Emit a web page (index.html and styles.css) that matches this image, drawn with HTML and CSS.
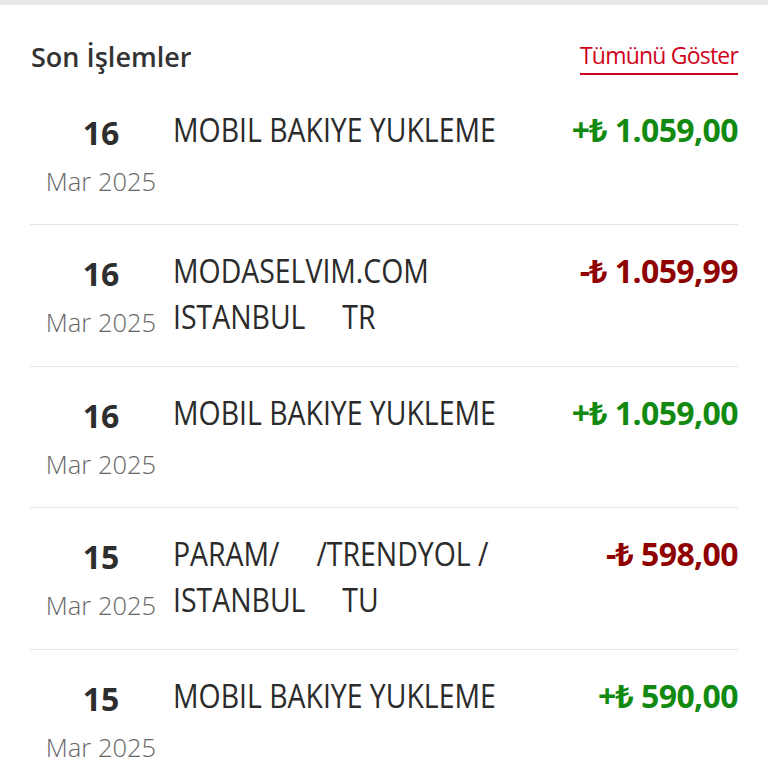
FILE: index.html
```html
<!DOCTYPE html>
<html lang="tr">
<head>
<meta charset="utf-8">
<link rel="stylesheet" href="styles.css">
</head>
<body>
<div class="topbar"></div>
<section class="panel">
  <header class="head">
    <h2 class="title">Son İşlemler</h2>
    <a class="more" href="#">Tümünü Göster</a>
  </header>
  <ul class="list">
    <li class="row">
      <div class="date"><span class="day">16</span><span class="month">Mar 2025</span></div>
      <div class="desc">MOBIL BAKIYE YUKLEME</div>
      <div class="amount plus">+₺ 1.059,00</div>
    </li>
    <li class="row">
      <div class="date"><span class="day">16</span><span class="month">Mar 2025</span></div>
      <div class="desc">MODASELVIM.COM<br>ISTANBUL&nbsp;&nbsp;&nbsp;&nbsp;&nbsp;TR</div>
      <div class="amount minus">-₺ 1.059,99</div>
    </li>
    <li class="row">
      <div class="date"><span class="day">16</span><span class="month">Mar 2025</span></div>
      <div class="desc">MOBIL BAKIYE YUKLEME</div>
      <div class="amount plus">+₺ 1.059,00</div>
    </li>
    <li class="row">
      <div class="date"><span class="day">15</span><span class="month">Mar 2025</span></div>
      <div class="desc">PARAM/&nbsp;&nbsp;&nbsp;&nbsp;&nbsp;/TRENDYOL /<br>ISTANBUL&nbsp;&nbsp;&nbsp;&nbsp;&nbsp;TU</div>
      <div class="amount minus">-₺ 598,00</div>
    </li>
    <li class="row">
      <div class="date"><span class="day">15</span><span class="month">Mar 2025</span></div>
      <div class="desc">MOBIL BAKIYE YUKLEME</div>
      <div class="amount plus">+₺ 590,00</div>
    </li>
  </ul>
</section>
</body>
</html>
```
FILE: styles.css
```css
* { box-sizing: border-box; }
html, body { margin: 0; padding: 0; background: #fff; }
body {
  font-family: "Open Sans", "Noto Sans", sans-serif;
  color: #2e2e2e;
  overflow: hidden;
}
.topbar { height: 5px; background: #e9e9e9; }
.panel { padding: 0 30px 0 30px; }
.head {
  display: flex;
  justify-content: space-between;
  align-items: center;
  height: 78.5px;
  padding: 26px 0 0 1px;
}
.title {
  margin: 0;
  font-size: 27px;
  font-weight: 600;
  font-stretch: 92%;
  line-height: 40px;
  color: #333;
}
.more {
  font-size: 23px;
  font-stretch: 92%;
  letter-spacing: -0.8px;
  color: #d0021b;
  text-decoration: none;
  border-bottom: 2px solid #d0021b;
  line-height: 30px;
  padding-bottom: 3px;
  margin-top: 0;
}
.list { list-style: none; margin: 0; padding: 0; }
.row {
  display: flex;
  align-items: flex-start;
  height: 141.5px;
  padding-top: 23px;
  border-bottom: 1.5px solid #e6e6e6;
}
.row:last-child { border-bottom: none; }
.date {
  width: 140px;
  flex: 0 0 140px;
  display: flex;
  flex-direction: column;
  align-items: center;
  margin-left: 1px;
}
.day {
  font-size: 32px;
  font-weight: 700;
  line-height: 47px;
  color: #2e2e2e;
  margin-top: 2px;
}
.month {
  font-size: 25.5px;
  font-weight: 300;
  line-height: 44px;
  color: #666;
  margin-top: 3px;
}
.desc {
  flex: 1;
  margin-left: 2px;
  font-size: 33px;
  font-stretch: 92%;
  line-height: 46px;
  color: #2b2b2b;
  white-space: nowrap;
  transform: scaleX(0.861);
  transform-origin: left top;
}
.amount {
  font-size: 32px;
  font-weight: 700;
  font-stretch: 92%;
  letter-spacing: -0.6px;
  line-height: 46px;
  white-space: nowrap;
}
.plus { color: #128a12; }
.minus { color: #8f0000; }
```
